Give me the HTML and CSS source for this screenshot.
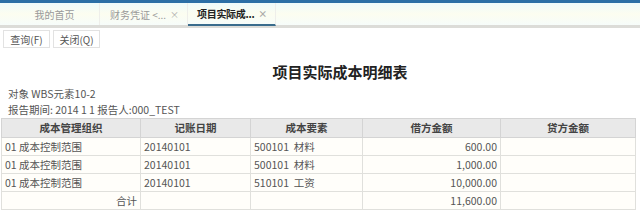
FILE: index.html
```html
<!DOCTYPE html>
<html lang="zh">
<head>
<meta charset="utf-8">
<link rel="stylesheet" href="styles.css">
</head>
<body>
<div class="topline"></div>
<div class="tabbar">
  <div class="tab tab-home">我的首页</div>
  <div class="tab">财务凭证 &lt;...<span class="x">×</span></div>
  <div class="tab active">项目实际成...<span class="x">×</span></div>
</div>
<div class="toolbar">
  <button class="btn">查询(F)</button>
  <button class="btn">关闭(Q)</button>
</div>
<div class="title">项目实际成本明细表</div>
<div class="info">对象 WBS元素10-2</div>
<div class="info">报告期间: 2014 1 1 报告人:000_TEST</div>
<table class="grid">
  <colgroup>
    <col class="c1"><col class="c2"><col class="c3"><col class="c4"><col class="c5">
  </colgroup>
  <thead>
    <tr><th>成本管理组织</th><th>记账日期</th><th>成本要素</th><th>借方金额</th><th>贷方金额</th></tr>
  </thead>
  <tbody>
    <tr><td>01 成本控制范围</td><td>20140101</td><td>500101&nbsp; 材料</td><td class="num">600.00</td><td></td></tr>
    <tr><td>01 成本控制范围</td><td>20140101</td><td>500101&nbsp; 材料</td><td class="num">1,000.00</td><td></td></tr>
    <tr><td>01 成本控制范围</td><td>20140101</td><td>510101&nbsp; 工资</td><td class="num">10,000.00</td><td></td></tr>
    <tr><td class="num">合计</td><td></td><td></td><td class="num">11,600.00</td><td></td></tr>
  </tbody>
</table>
</body>
</html>
```
FILE: styles.css
```css
html, body {
  margin: 0;
  padding: 0;
  background: #ffffff;
  width: 640px;
  height: 216px;
  overflow: hidden;
  font-family: "Noto Sans CJK SC", "Noto Sans", sans-serif;
  font-size: 11px;
  color: #444;
}
.topline {
  height: 3px;
  background: #2c6fa6;
}
.tabbar {
  height: 22px;
  background: linear-gradient(#effbfb, #fcfdf0 50%, #f6fcfa);
  border-bottom: 3px solid #dcdcd8;
  display: flex;
  padding-left: 10px;
}
.tab {
  width: 88px;
  box-sizing: border-box;
  display: flex;
  align-items: center;
  justify-content: space-between;
  padding: 0 8px 0 10px;
  color: #999;
  font-size: 10px;
  white-space: nowrap;
  border-right: 1px solid #eeeeea;
}
.tab-home {
  width: 90px;
  justify-content: center;
  padding: 0;
}
.tab .x {
  font-size: 9px;
  color: #aaa;
}
.tab.active {
  color: #222;
  font-weight: bold;
  font-size: 10px;
  padding-left: 9px;
  letter-spacing: -0.3px;
  border-bottom: 2px solid #3a6c8c;
  margin-bottom: -1px;
}
.toolbar {
  height: 22px;
  display: flex;
  align-items: center;
  gap: 3px;
  padding-left: 3px;
}
.btn {
  height: 18px;
  width: 47px;
  padding: 0;
  border: 1px solid #e2e2e2;
  background: #fff;
  font-family: inherit;
  font-size: 10px;
  color: #555;
}
.title {
  height: 36px;
  line-height: 44px;
  text-align: center;
  font-size: 15px;
  font-weight: bold;
  color: #222;
  padding-left: 40px;
}
.info {
  height: 16px;
  line-height: 16px;
  padding-left: 8px;
  font-size: 10.5px;
  color: #555;
}
.grid {
  border-collapse: collapse;
  margin-left: 1px;
  width: 634px;
  table-layout: fixed;
  background: #fffefa;
}
.c1 { width: 139px; }
.c2 { width: 110px; }
.c3 { width: 112px; }
.c4 { width: 138px; }
.c5 { width: 135px; }
.grid th {
  height: 18px;
  line-height: 18px;
  padding: 0;
  background: #e9e9e9;
  border: 1px solid #d4d4d4;
  font-weight: bold;
  font-size: 10.5px;
  color: #444;
}
.grid td {
  height: 17px;
  line-height: 17px;
  padding: 0 3px;
  border: 1px solid #e0e0dc;
  font-size: 10.5px;
  color: #555;
  white-space: nowrap;
}
.grid td.num {
  text-align: right;
}
```
